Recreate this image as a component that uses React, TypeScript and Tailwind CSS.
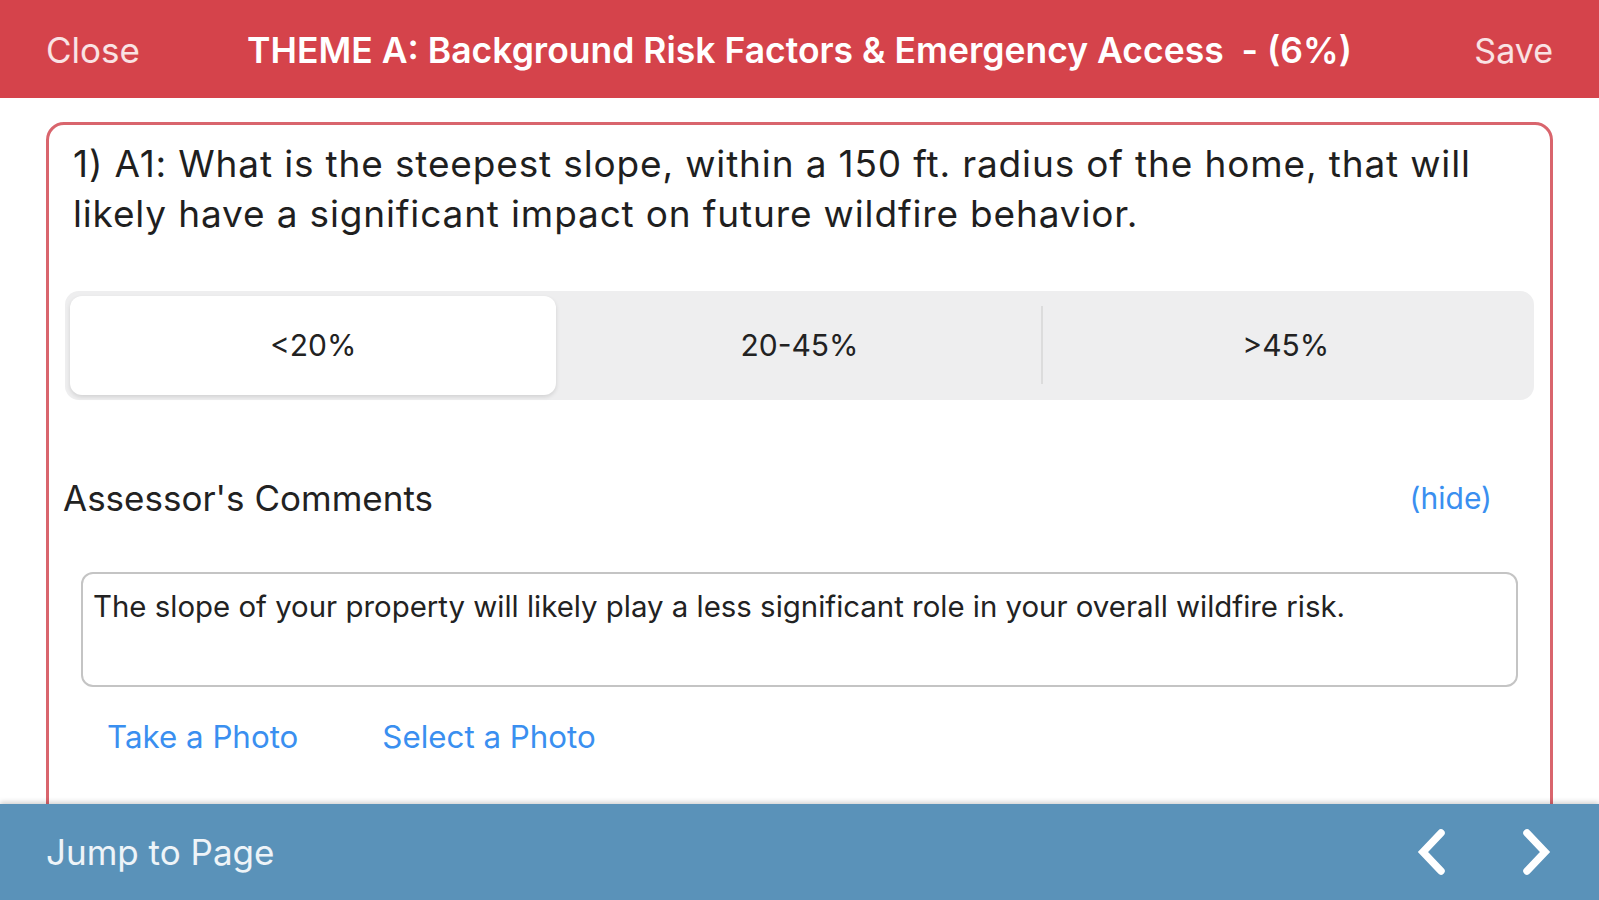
import React from "react";

const options = ["<20%", "20-45%", ">45%"];

function Chevron({ dir }: { dir: "left" | "right" }) {
  return (
    <svg width="32" height="46" viewBox="0 0 32 46" fill="none">
      <polyline
        points={dir === "left" ? "26,4 8,23 26,42" : "6,4 24,23 6,42"}
        stroke="white"
        strokeWidth="7.5"
        strokeLinecap="round"
        strokeLinejoin="miter"
      />
    </svg>
  );
}

export default function App() {
  const selected = 0;

  return (
    <div
      className="flex h-[900px] w-full flex-col overflow-hidden bg-white"
      style={{ fontFamily: 'Inter, "Liberation Sans", Arial, sans-serif' }}
    >
      {/* top bar */}
      <header className="grid h-[98px] shrink-0 grid-cols-[1fr_auto_1fr] items-center bg-[#d5434b] px-[46px] pt-[3px]">
        <button className="justify-self-start text-[35px] text-white/85">Close</button>
        <h1 className="text-[35.5px] font-semibold text-white">
          THEME A: Background Risk Factors &amp; Emergency Access&nbsp; - (6%)
        </h1>
        <button className="justify-self-end text-[34px] text-white/85">Save</button>
      </header>

      {/* question card */}
      <main className="flex-1 overflow-hidden px-[46px] pt-[24px]">
        <div className="h-[720px] rounded-[18px] border-[3px] border-[#d9656d] bg-white">
          <p className="px-[24px] pt-[14px] text-[37px] leading-[50px] tracking-[0.85px] text-[#1f1f1f]">
            1) A1: What is the steepest slope, within a 150 ft. radius of the home, that will
            likely have a significant impact on future wildfire behavior.
          </p>

          <div className="mx-[16px] mt-[52px] flex h-[109px] rounded-[14px] bg-[#eeeeef] p-[5px]">
            {options.map((opt, i) => (
              <div key={opt} className="relative flex flex-1 items-center justify-center">
                {i === selected ? (
                  <div className="flex h-full w-full items-center justify-center rounded-[12px] bg-white text-[30px] text-[#222] shadow-[0_2px_4px_rgba(0,0,0,0.12)]">
                    {opt}
                  </div>
                ) : (
                  <span className="text-[30px] text-[#222]">{opt}</span>
                )}
                {i === 1 && (
                  <div className="absolute right-0 top-[10px] h-[78px] w-[2px] bg-[#dcdcdc]" />
                )}
              </div>
            ))}
          </div>

          <div className="mt-[72px] flex items-center justify-between pl-[14px] pr-[58px]">
            <span className="text-[35px] text-[#222]">Assessor's Comments</span>
            <button className="text-[30px] text-[#3a8ff0]">(hide)</button>
          </div>

          <div className="mx-[32px] mt-[47px] h-[115px] rounded-[12px] border-2 border-[#c4c4c4] px-[10px] pt-[16px] text-[29.4px] leading-[34px] text-[#222]">
            The slope of your property will likely play a less significant role in your overall
            wildfire risk.
          </div>

          <div className="mt-[27px] flex gap-[84px] pl-[58px] text-[31.3px] text-[#3a8ff0]">
            <button>Take a Photo</button>
            <button>Select a Photo</button>
          </div>
        </div>
      </main>

      {/* bottom bar */}
      <footer className="relative flex h-[96px] shrink-0 items-center justify-between bg-[#5a92b9] pl-[46px] pr-[46px] shadow-[0_-2px_5px_rgba(0,0,0,0.18)]">
        <span className="text-[35px] text-white/90">Jump to Page</span>
        <div className="flex items-center gap-[74px]">
          <Chevron dir="left" />
          <Chevron dir="right" />
        </div>
      </footer>
    </div>
  );
}
